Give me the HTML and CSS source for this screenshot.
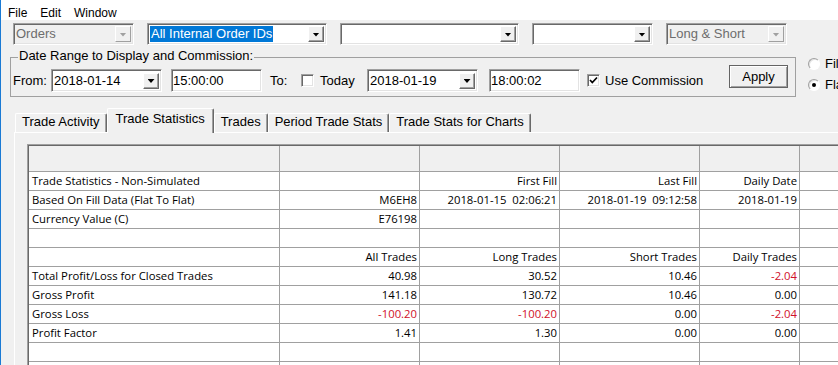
FILE: index.html
```html
<!DOCTYPE html>
<html lang="en">
<head>
  <meta charset="UTF-8">
  <title>Trade Statistics</title>
  <link rel="stylesheet" href="styles.css">
</head>
<body>
  <div class="window">
    <!-- Menu -->
    <div class="menubar">
      <span class="menu-item">File</span>
      <span class="menu-item">Edit</span>
      <span class="menu-item">Window</span>
    </div>

    <!-- Filter combos -->
    <div class="toolbar">
      <div class="combo combo-disabled w-orders">
        <span class="combo-text">Orders</span>
        <span class="drop-btn"><i class="arrow"></i></span>
      </div>
      <div class="combo w-wide">
        <span class="combo-text"><span class="selected">All Internal Order IDs</span></span>
        <span class="drop-btn"><i class="arrow"></i></span>
      </div>
      <div class="combo w-wide2">
        <span class="combo-text"></span>
        <span class="drop-btn"><i class="arrow"></i></span>
      </div>
      <div class="combo w-small">
        <span class="combo-text"></span>
        <span class="drop-btn"><i class="arrow"></i></span>
      </div>
      <div class="combo combo-disabled w-small">
        <span class="combo-text">Long &amp; Short</span>
        <span class="drop-btn"><i class="arrow"></i></span>
      </div>
    </div>

    <!-- Date range -->
    <div class="filter-row">
      <fieldset class="date-group">
        <legend>Date Range to Display and Commission:</legend>
        <div class="date-row">
          <span class="lbl lbl-from">From:</span>
          <div class="combo date-combo">
            <span class="combo-text">2018-01-14</span>
            <span class="drop-btn"><i class="arrow"></i></span>
          </div>
          <div class="edit time-edit">15:00:00</div>
          <span class="lbl lbl-to">To:</span>
          <span class="check"></span>
          <span class="lbl lbl-today">Today</span>
          <div class="combo date-combo">
            <span class="combo-text">2018-01-19</span>
            <span class="drop-btn"><i class="arrow"></i></span>
          </div>
          <div class="edit time-edit time-to">18:00:02</div>
          <span class="check check-comm">
            <svg width="11" height="11" viewBox="0 0 11 11"><path d="M2 5 L4.3 7.5 L9 2.5" fill="none" stroke="#000" stroke-width="1.7"/></svg>
          </span>
          <span class="lbl lbl-comm">Use Commission</span>
          <button class="btn-apply">Apply</button>
        </div>
      </fieldset>
      <div class="radio-group">
        <label class="radio"><span class="radio-dot"></span>Fills</label>
        <label class="radio"><span class="radio-dot checked"></span>Flat To Flat</label>
      </div>
    </div>

    <!-- Tabs -->
    <div class="tabs">
      <span class="tab">Trade Activity</span>
      <span class="tab active">Trade Statistics</span>
      <span class="tab">Trades</span>
      <span class="tab">Period Trade Stats</span>
      <span class="tab">Trade Stats for Charts</span>
    </div>

    <div class="tab-panel">
      <div class="grid-wrap">
        <table class="grid">
          <colgroup>
            <col class="c-name"><col class="c-val"><col class="c-val"><col class="c-val"><col class="c-day"><col class="c-day">
          </colgroup>
          <tr class="head"><td></td><td></td><td></td><td></td><td></td><td></td></tr>
          <tr><td>Trade Statistics - Non-Simulated</td><td></td><td class="num">First Fill</td><td class="num">Last Fill</td><td class="num">Daily Date</td><td></td></tr>
          <tr><td>Based On Fill Data (Flat To Flat)</td><td class="num">M6EH8</td><td class="num">2018-01-15&nbsp;&nbsp;02:06:21</td><td class="num">2018-01-19&nbsp;&nbsp;09:12:58</td><td class="num">2018-01-19</td><td></td></tr>
          <tr><td>Currency Value (C)</td><td class="num">E76198</td><td></td><td></td><td></td><td></td></tr>
          <tr><td></td><td></td><td></td><td></td><td></td><td></td></tr>
          <tr><td></td><td class="num">All Trades</td><td class="num">Long Trades</td><td class="num">Short Trades</td><td class="num">Daily Trades</td><td></td></tr>
          <tr><td>Total Profit/Loss for Closed Trades</td><td class="num">40.98</td><td class="num">30.52</td><td class="num">10.46</td><td class="num neg">-2.04</td><td></td></tr>
          <tr><td>Gross Profit</td><td class="num">141.18</td><td class="num">130.72</td><td class="num">10.46</td><td class="num">0.00</td><td></td></tr>
          <tr><td>Gross Loss</td><td class="num neg">-100.20</td><td class="num neg">-100.20</td><td class="num">0.00</td><td class="num neg">-2.04</td><td></td></tr>
          <tr><td>Profit Factor</td><td class="num">1.41</td><td class="num">1.30</td><td class="num">0.00</td><td class="num">0.00</td><td></td></tr>
          <tr><td></td><td></td><td></td><td></td><td></td><td></td></tr>
          <tr><td></td><td></td><td></td><td></td><td></td><td></td></tr>
        </table>
      </div>
    </div>
  </div>
</body>
</html>
```

FILE: styles.css
```css
:root {
  --face: #f0f0f0;
  --shadow: #a0a0a0;
  --dark: #696969;
  --light: #e3e3e3;
  --accent: #1a7ad4;
  --select: #0078d7;
  --neg: #d0102a;
}
html, body {
  margin: 0;
  padding: 0;
  width: 838px;
  height: 365px;
  overflow: hidden;
  background: var(--face);
  font-family: "Liberation Sans", Arial, sans-serif;
  font-size: 13px;
  color: #000;
}
.window {
  height: 365px;
  box-sizing: border-box;
  border-left: 1px solid var(--accent);
  overflow: hidden;
}

/* Menu */
.menubar {
  height: 20px;
  box-sizing: border-box;
  padding: 3px 0 0 7px;
  background: #fff;
  display: flex;
  gap: 13px;
  font-size: 12px;
  line-height: 20px;
}

/* Combos */
.toolbar {
  display: flex;
  gap: 13px;
  padding: 3px 0 0 12px;
}
.toolbar > *, .date-row > *, .filter-row > * { flex-shrink: 0; }
.combo, .edit {
  height: 22px;
  box-sizing: border-box;
  border: 1px solid;
  border-color: var(--shadow) #fff #fff var(--shadow);
  box-shadow: inset 1px 1px var(--dark), inset -1px -1px var(--light);
  background: #fff;
  padding: 2px;
  display: flex;
  align-items: center;
  white-space: nowrap;
}
.combo-text {
  flex: 1;
  line-height: 16px;
  overflow: hidden;
}
.combo-text .selected {
  display: inline-block;
  background: var(--select);
  color: #fff;
  padding: 0 1px;
}
.combo-disabled { background: var(--face); color: #6d6d6d; }
.w-orders { width: 121px; }
.w-wide { width: 180px; }
.w-wide2 { width: 179px; }
.w-small { width: 121px; }
.drop-btn {
  width: 16px;
  height: 16px;
  box-sizing: border-box;
  background: var(--face);
  border: 1px solid;
  border-color: #fff var(--dark) var(--dark) #fff;
  box-shadow: inset -1px -1px var(--shadow);
  display: flex;
  align-items: center;
  justify-content: center;
}
.arrow {
  width: 7px;
  height: 4px;
  background: #000;
  clip-path: polygon(0 0, 100% 0, 50% 100%);
  margin-top: 1px;
}
.combo-disabled .drop-btn { border-color: #fff var(--shadow) var(--shadow) #fff; box-shadow: none; }
.combo-disabled .arrow { background: var(--shadow); }

/* Date range group */
.filter-row {
  display: flex;
  align-items: flex-start;
}
.date-group {
  width: 786px;
  box-sizing: border-box;
  min-width: 0;
  margin: 4px 0 0 9px;
  padding: 4px 7px 4px 2px;
  border: 1px solid var(--shadow);
}
.date-group legend {
  margin-left: 5px;
  padding: 0 1px 3px 1px;
  line-height: 13px;
}
.date-row {
  display: flex;
  align-items: center;
  height: 23px;
}
.lbl { white-space: nowrap; }
.lbl-from { width: 38px; }
.lbl-to { width: 31px; margin-left: 8px; }
.lbl-today { width: 47px; margin-left: 6px; }
.lbl-comm { width: 124px; margin-left: 5px; }
.date-combo { width: 111px; height: 23px; }
.time-edit { width: 91px; height: 23px; margin-left: 9px; padding-left: 1px; }
.time-to { margin-left: 11px; }
.check {
  width: 13px;
  height: 13px;
  box-sizing: border-box;
  border: 1px solid;
  border-color: var(--shadow) #fff #fff var(--shadow);
  box-shadow: inset 1px 1px var(--dark), inset -1px -1px var(--light);
  background: #fff;
  display: flex;
  align-items: center;
  justify-content: center;
}
.check-comm { margin-left: 7px; }
.btn-apply {
  width: 59px;
  height: 23px;
  margin-top: -8px;
  padding: 0;
  font: inherit;
  background: var(--face);
  border: 1px solid #646464;
  box-shadow: inset 1px 1px #fff, inset -1px -1px var(--shadow);
}

/* Radio buttons on the right */
.radio-group {
  margin: 8px 0 0 12px;
  display: flex;
  flex-direction: column;
}
.radio {
  height: 21px;
  display: flex;
  align-items: center;
  gap: 5px;
  white-space: nowrap;
}
.radio-dot {
  width: 12px;
  height: 12px;
  box-sizing: border-box;
  border-radius: 50%;
  border: 1px solid;
  border-color: var(--shadow) #fff #fff var(--shadow);
  box-shadow: inset 1px 1px var(--light);
  background: #fff;
  display: flex;
  align-items: center;
  justify-content: center;
}
.radio-dot.checked::after {
  content: "";
  width: 4px;
  height: 4px;
  border-radius: 50%;
  background: #000;
}

/* Tabs */
.tabs {
  display: flex;
  align-items: flex-end;
  height: 25px;
  margin-top: 10px;
  padding-left: 14px;
}
.tab {
  height: 19px;
  box-sizing: border-box;
  padding: 0 6px 1px 6px;
  line-height: 16px;
  border-top: 1px solid #fff;
  border-left: 1px solid #fff;
  border-right: 1px solid var(--dark);
  box-shadow: inset -1px 0 var(--shadow);
  border-radius: 2px 2px 0 0;
  white-space: nowrap;
}
.tab.active {
  height: 25px;
  padding: 2px 8px 0 8px;
  margin-bottom: -1px;
  position: relative;
  background: var(--face);
}
.tab-panel {
  margin-left: 13px;
  border-top: 1px solid #fff;
  border-left: 1px solid #fff;
  padding: 11px 0 0 12px;
  height: 300px;
}

/* Statistics grid */
.grid-wrap {
  width: 880px;
  border-top: 1px solid var(--shadow);
  border-left: 1px solid var(--shadow);
}
.grid {
  table-layout: fixed;
  width: 872px;
  border-collapse: separate;
  border-spacing: 0;
  border-top: 1px solid var(--dark);
  border-left: 1px solid var(--dark);
  font-family: "Open Sans", "Liberation Sans", sans-serif;
  font-size: 11.3px;
}
.c-name { width: 251px; }
.c-val { width: 140px; }
.c-day { width: 100px; }
.grid td {
  height: 18px;
  padding: 0 3px;
  line-height: 18px;
  background: #fff;
  border-right: 1px solid var(--shadow);
  border-bottom: 1px solid var(--shadow);
  white-space: nowrap;
  overflow: hidden;
}
.grid .head td {
  height: 25px;
  background: var(--face);
}
.grid .num { text-align: right; padding-right: 2px; }
.grid .neg { color: var(--neg); }
```
